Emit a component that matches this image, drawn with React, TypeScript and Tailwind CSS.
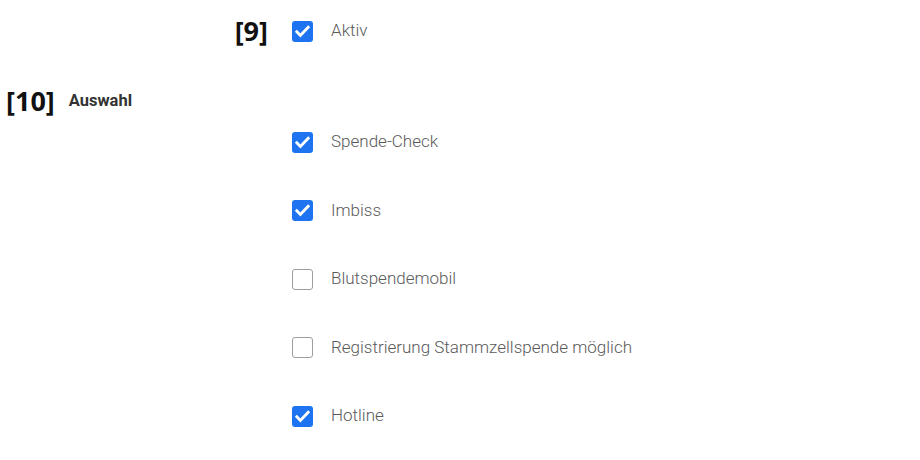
import React from 'react'

const options = [
  { label: 'Spende-Check', checked: true },
  { label: 'Imbiss', checked: true },
  { label: 'Blutspendemobil', checked: false },
  { label: 'Registrierung Stammzellspende möglich', checked: false },
  { label: 'Hotline', checked: true },
]

function Box({ checked }: { checked: boolean }) {
  if (checked) {
    return (
      <span className="flex h-[21px] w-[21px] shrink-0 items-center justify-center rounded-[3px] bg-[#1e74f0]">
        <svg width="17" height="17" viewBox="0 0 24 24" fill="none">
          <path d="M4 12.5l5 5 11-11.5" stroke="white" strokeWidth="4" strokeLinecap="square" />
        </svg>
      </span>
    )
  }
  return <span className="h-[21px] w-[21px] shrink-0 rounded-[3px] border-[1.5px] border-[#9e9e9e] bg-white" />
}

function Option({ label, checked }: { label: string; checked: boolean }) {
  return (
    <label className="flex h-[21px] items-center gap-[18px]">
      <Box checked={checked} />
      <span className="text-[17px] font-light text-[#5a5a5a]">{label}</span>
    </label>
  )
}

export default function App() {
  return (
    <div className="h-[460px] w-[920px] bg-white font-['Roboto',sans-serif]">
      <div className="flex h-[62px] items-center">
        <div className="w-[268px] text-right font-['Open_Sans',sans-serif] text-[27px] font-bold text-[#111]">[9]</div>
        <div className="ml-[24px]">
          <Option label="Aktiv" checked />
        </div>
      </div>

      <div className="mt-[19px] flex h-[40px] items-center gap-[14px] pl-[6px]">
        <span className="font-['Open_Sans',sans-serif] text-[27px] font-bold text-[#111]">[10]</span>
        <span className="text-[16.5px] font-bold text-[#333]">Auswahl</span>
      </div>

      <div className="mt-[10.5px] flex flex-col gap-[47.5px] pl-[292px]">
        {options.map(o => (
          <Option key={o.label} label={o.label} checked={o.checked} />
        ))}
      </div>
    </div>
  )
}
